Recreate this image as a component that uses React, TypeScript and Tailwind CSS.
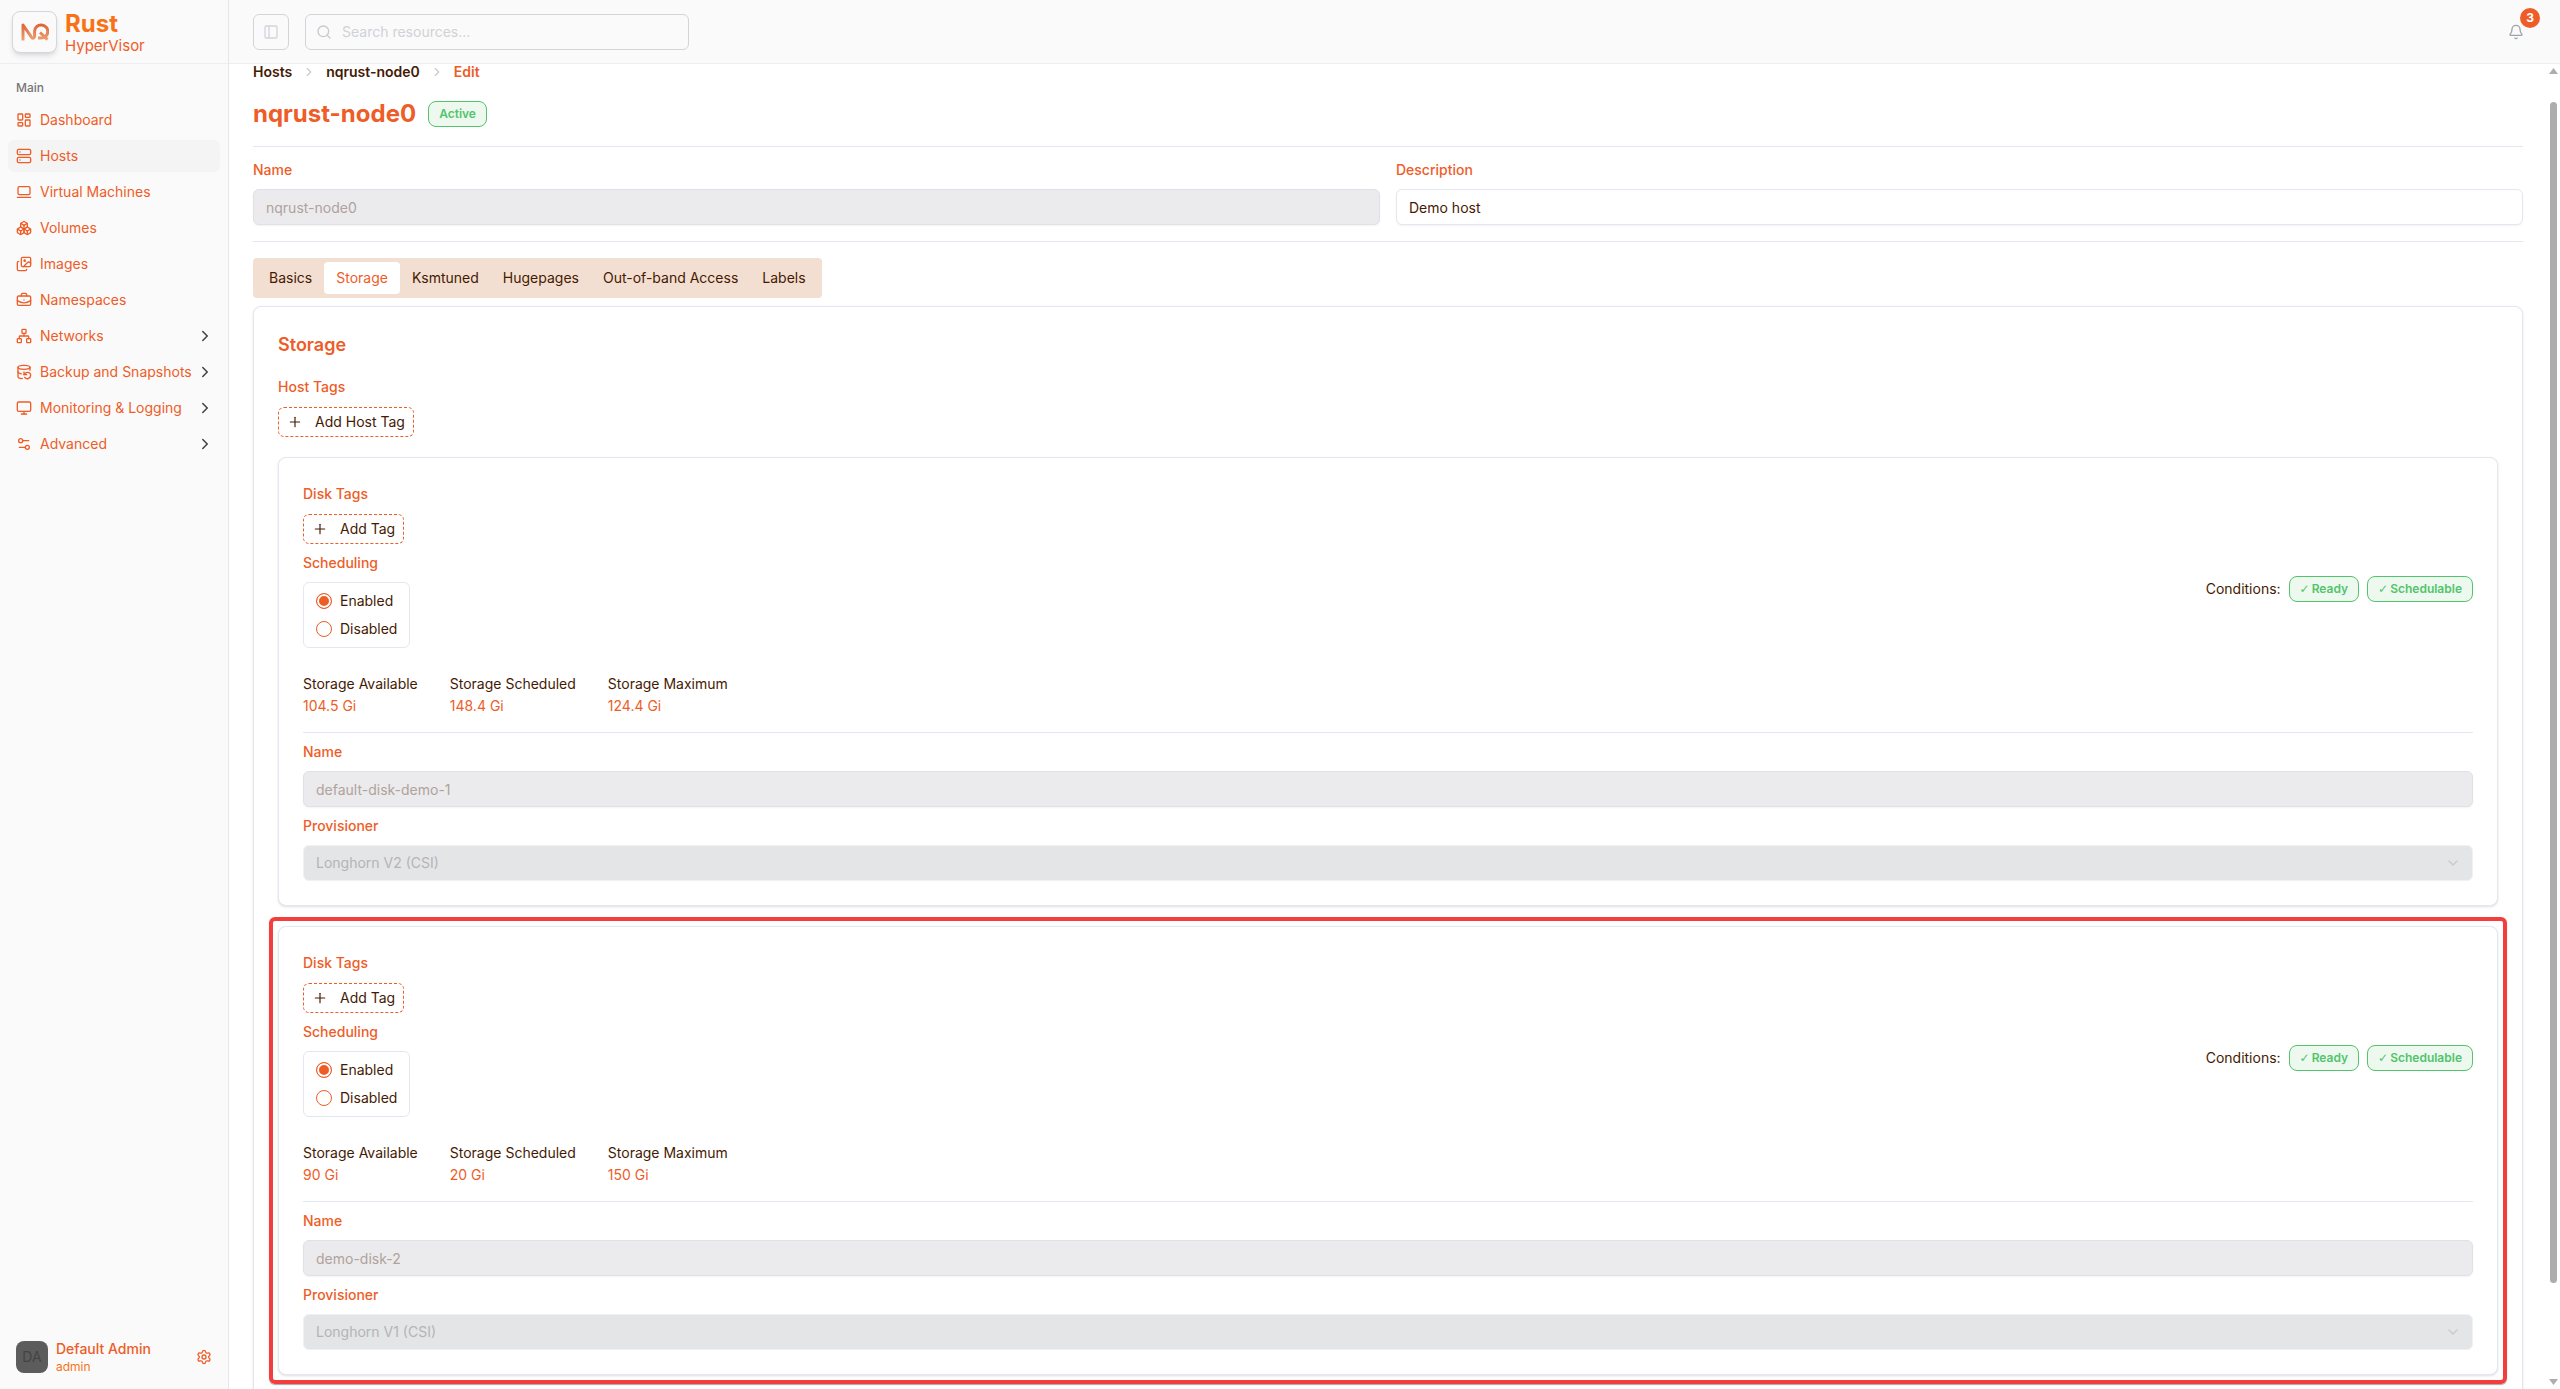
import {
  Bell,
  Boxes,
  BriefcaseBusiness,
  ChevronDown,
  ChevronRight,
  DatabaseBackup,
  Images,
  LaptopMinimal,
  LayoutDashboard,
  Monitor,
  Network,
  PanelLeft,
  Plus,
  Search,
  Server,
  Settings,
  Settings2,
  type LucideIcon,
} from "lucide-react";
import { useState } from "react";

type NavItem = {
  label: string;
  icon: LucideIcon;
  active?: boolean;
  nested?: boolean;
};

type Disk = {
  id: string;
  name: string;
  provisioner: string;
  available: string;
  scheduled: string;
  maximum: string;
  highlighted?: boolean;
};

const NAV_ITEMS: NavItem[] = [
  { label: "Dashboard", icon: LayoutDashboard },
  { label: "Hosts", icon: Server, active: true },
  { label: "Virtual Machines", icon: LaptopMinimal },
  { label: "Volumes", icon: Boxes },
  { label: "Images", icon: Images },
  { label: "Namespaces", icon: BriefcaseBusiness },
  { label: "Networks", icon: Network, nested: true },
  { label: "Backup and Snapshots", icon: DatabaseBackup, nested: true },
  { label: "Monitoring & Logging", icon: Monitor, nested: true },
  { label: "Advanced", icon: Settings2, nested: true },
];

const TABS = ["Basics", "Storage", "Ksmtuned", "Hugepages", "Out-of-band Access", "Labels"];

const DISKS: Disk[] = [
  {
    id: "disk-1",
    name: "default-disk-demo-1",
    provisioner: "Longhorn V2 (CSI)",
    available: "104.5 Gi",
    scheduled: "148.4 Gi",
    maximum: "124.4 Gi",
  },
  {
    id: "disk-2",
    name: "demo-disk-2",
    provisioner: "Longhorn V1 (CSI)",
    available: "90 Gi",
    scheduled: "20 Gi",
    maximum: "150 Gi",
    highlighted: true,
  },
];

const labelClass = "mb-2 block text-sm leading-[22px] font-medium text-[#ee5d27]";
const inputClass =
  "block h-9 w-full rounded-md border border-[#e2e8f0] bg-white px-3 text-sm text-[#451a03] shadow-xs disabled:border-[#e0e1e6] disabled:bg-[#ebebed] disabled:text-[#b0a29c]";

function Logo() {
  return (
    <svg viewBox="0 0 28 20" className="h-5 w-7" fill="none" strokeWidth="3" strokeLinejoin="round">
      <defs>
        <linearGradient id="logo-fill" gradientUnits="userSpaceOnUse" x1="0" y1="1" x2="0" y2="19">
          <stop offset="0" stopColor="#dd5f2f" />
          <stop offset="1" stopColor="#eda379" />
        </linearGradient>
      </defs>
      <path
        d="M2 18.5V3l8.6 12.3c1.2 1.6 3 1 3-1V9.2a6.6 6.6 0 1 1 6.6 6.9H17"
        stroke="url(#logo-fill)"
      />
      <path d="M19 10.5l7.5 7.2" stroke="url(#logo-fill)" />
    </svg>
  );
}

function Sidebar() {
  return (
    <aside className="flex w-[229px] shrink-0 flex-col border-r border-[#e5e7eb] bg-[#fafafa]">
      <div className="flex h-16 shrink-0 items-center gap-2 border-b border-[#eeeeef] px-3">
        <div className="flex h-[42px] w-[45px] items-center justify-center rounded-lg border border-[#d5d7e0] bg-[#fafafa] shadow-md">
          <Logo />
        </div>
        <div className="flex flex-col pt-1">
          <span className="text-2xl leading-6 font-bold text-[#f97316]">Rust</span>
          <span className="text-[15px] leading-5 text-[#ee5d27]">HyperVisor</span>
        </div>
      </div>

      <nav aria-label="Main" className="flex flex-1 flex-col p-2">
        <div className="flex h-8 items-center px-2 text-xs font-medium text-[#777777]">Main</div>
        <ul className="flex flex-col gap-1">
          {NAV_ITEMS.map(({ label, icon: Icon, active, nested }) => (
            <li key={label}>
              <a
                href="#"
                aria-current={active ? "page" : undefined}
                className={`flex h-8 items-center gap-2 rounded-md pr-1.5 pl-2 text-sm whitespace-nowrap text-[#ee5d27] ${active ? "bg-[#f4f4f5]" : ""}`}
              >
                <Icon className="size-4 shrink-0" />
                <span className="min-w-0 flex-1">{label}</span>
                {nested ? <ChevronRight className="size-[18px] shrink-0 text-[#3f3f46]" /> : null}
              </a>
            </li>
          ))}
        </ul>
      </nav>

      <div className="flex items-center gap-2 px-4 pt-4 pb-3.5">
        <div className="flex size-8 items-center justify-center rounded-lg bg-[#5c5c5c] text-sm text-[#444444]">
          DA
        </div>
        <div className="flex flex-1 flex-col">
          <span className="text-sm leading-5 font-medium text-[#ee5d27]">Default Admin</span>
          <span className="text-xs leading-4 text-[#f97316]">admin</span>
        </div>
        <button type="button" aria-label="Settings" className="text-[#ee5d27]">
          <Settings className="size-4" />
        </button>
      </div>
    </aside>
  );
}

function TopBar() {
  return (
    <header className="flex h-16 shrink-0 items-center gap-4 border-b border-[#eeeeef] bg-[#fafafa] pr-9 pl-6">
      <button
        type="button"
        aria-label="Toggle sidebar"
        className="flex size-9 items-center justify-center rounded-md border border-[#d1d5db] text-[#d1d5db]"
      >
        <PanelLeft className="size-4" />
      </button>
      <label className="flex h-9 w-96 items-center gap-2.5 rounded-md border border-[#d1d5db] px-2.5">
        <Search className="size-4 shrink-0 text-[#c6c9ce]" />
        <input
          type="search"
          aria-label="Search resources"
          placeholder="Search resources..."
          className="w-full bg-transparent text-sm outline-none placeholder:text-[#cfd2d7]"
        />
      </label>
      <button
        type="button"
        aria-label="Notifications"
        className="relative ml-auto flex size-4 items-center justify-center text-[#9ca3af]"
      >
        <Bell className="size-4" />
        <span className="absolute -top-4 left-3 flex size-5 items-center justify-center rounded-full bg-[#ee5d27] text-xs font-bold text-white">
          3
        </span>
      </button>
    </header>
  );
}

function StatusBadge({ children, check }: { children: string; check?: boolean }) {
  return (
    <span className="flex h-[26px] items-center gap-0.5 rounded-lg border border-[#51c46c] bg-[#edf9ef] px-2.5 text-xs leading-4 font-semibold whitespace-nowrap text-[#51c46c]">
      {check ? <span className="font-['DejaVu_Sans',sans-serif]">✓</span> : null}
      {children}
    </span>
  );
}

function AddButton({ children }: { children: string }) {
  return (
    <button
      type="button"
      className="flex h-[30px] w-fit items-center gap-3 rounded-md border border-dashed border-[#ee5d27] px-2 text-sm text-[#451a03]"
    >
      <Plus className="size-4" strokeWidth={1.75} />
      {children}
    </button>
  );
}

function SchedulingOptions({ diskId }: { diskId: string }) {
  const [value, setValue] = useState("Enabled");

  return (
    <fieldset>
      <legend className={labelClass}>Scheduling</legend>
      <div className="flex w-fit flex-col gap-2 rounded-md border border-[#e2e8f0] px-3 py-2">
        {["Enabled", "Disabled"].map((option) => (
          <label key={option} className="flex h-5 items-center gap-2 text-sm text-[#451a03]">
            <input
              type="radio"
              name={`${diskId}-scheduling`}
              checked={value === option}
              onChange={() => setValue(option)}
              className="size-4 appearance-none rounded-full border border-[#ee5d27] checked:bg-[#ee5d27] checked:shadow-[inset_0_0_0_2px_white]"
            />
            {option}
          </label>
        ))}
      </div>
    </fieldset>
  );
}

function DiskCard({ disk }: { disk: Disk }) {
  const stats = [
    ["Storage Available", disk.available],
    ["Storage Scheduled", disk.scheduled],
    ["Storage Maximum", disk.maximum],
  ];

  return (
    <section className="relative rounded-lg border border-[#e2e8f0] bg-white p-6 shadow-sm">
      <h3 className="mb-2 text-sm leading-6 font-medium text-[#ee5d27]">Disk Tags</h3>
      <AddButton>Add Tag</AddButton>

      <div className="mt-2 flex items-start justify-between">
        <SchedulingOptions diskId={disk.id} />
        <div className="flex items-center gap-2 pt-6 text-sm text-[#451a03]">
          <span>Conditions:</span>
          <StatusBadge check>Ready</StatusBadge>
          <StatusBadge check>Schedulable</StatusBadge>
        </div>
      </div>

      <dl className="mt-[26px] flex gap-8 text-sm leading-5">
        {stats.map(([term, amount]) => (
          <div key={term} className="flex flex-col gap-0.5">
            <dt className="text-[#451a03]">{term}</dt>
            <dd className="text-[#ee5d27]">{amount}</dd>
          </div>
        ))}
      </dl>

      <hr className="mt-4 mb-2 border-[#e2e8f0]" />

      <label htmlFor={`${disk.id}-name`} className={labelClass}>
        Name
      </label>
      <input id={`${disk.id}-name`} className={inputClass} defaultValue={disk.name} disabled />

      <label htmlFor={`${disk.id}-provisioner`} className={`mt-2 ${labelClass}`}>
        Provisioner
      </label>
      <div className="relative">
        <select
          id={`${disk.id}-provisioner`}
          disabled
          className="block h-9 w-full appearance-none rounded-md border border-[#f0f1f3] bg-[#e4e5e7] px-3 text-sm text-[#b4b4b5] opacity-100"
        >
          <option>{disk.provisioner}</option>
        </select>
        <ChevronDown className="pointer-events-none absolute top-2.5 right-3 size-4 text-[#c8c9cb]" />
      </div>

      {disk.highlighted ? (
        <div className="pointer-events-none absolute -inset-2.5 rounded-md border-4 border-[#f43d3d] shadow-[0_1px_1px_rgba(0,0,0,0.35)]" />
      ) : null}
    </section>
  );
}

function Scrollbar() {
  return (
    <div aria-hidden="true" className="flex w-[13px] shrink-0 flex-col items-center py-1 text-[#adadad]">
      <svg viewBox="0 0 9 6" className="h-1.5 w-[9px]" fill="currentColor">
        <path d="M4.5 0 9 6H0z" />
      </svg>
      <div className="mt-7 mb-24 w-[7px] flex-1 rounded-full bg-[#adadad]" />
      <svg viewBox="0 0 9 6" className="h-1.5 w-[9px]" fill="currentColor">
        <path d="M0 0h9L4.5 6z" />
      </svg>
    </div>
  );
}

export default function App() {
  const [tab, setTab] = useState("Storage");

  return (
    <div className="flex h-screen overflow-hidden bg-white font-['Inter',sans-serif]">
      <Sidebar />

      <div className="flex min-w-0 flex-1 flex-col">
        <TopBar />

        <div className="flex min-h-0 flex-1">
          <main className="min-w-0 flex-1 overflow-hidden px-6">
            <nav aria-label="Breadcrumb">
              <ol className="flex items-center gap-2.5 text-sm leading-4 font-semibold text-[#451a03]">
                <li>
                  <a href="#">Hosts</a>
                </li>
                <li aria-hidden="true">
                  <ChevronRight className="size-3.5 text-[#c9c9cc]" />
                </li>
                <li>
                  <a href="#">nqrust-node0</a>
                </li>
                <li aria-hidden="true">
                  <ChevronRight className="size-3.5 text-[#c9c9cc]" />
                </li>
                <li aria-current="page" className="text-[#ee5d27]">
                  Edit
                </li>
              </ol>
            </nav>

            <div className="mt-[18px] flex items-center gap-3">
              <h1 className="text-2xl font-bold text-[#ee5d27]">nqrust-node0</h1>
              <StatusBadge>Active</StatusBadge>
            </div>

            <hr className="mt-4 mb-3 border-[#e2e8f0]" />

            <div className="grid grid-cols-2 gap-4">
              <div>
                <label htmlFor="host-name" className={labelClass}>
                  Name
                </label>
                <input id="host-name" className={inputClass} defaultValue="nqrust-node0" disabled />
              </div>
              <div>
                <label htmlFor="host-description" className={labelClass}>
                  Description
                </label>
                <input id="host-description" className={inputClass} defaultValue="Demo host" />
              </div>
            </div>

            <hr className="my-4 border-[#e2e8f0]" />

            <div role="tablist" className="flex h-10 w-fit rounded-sm bg-[#f3dfd1] p-1">
              {TABS.map((name) => (
                <button
                  key={name}
                  type="button"
                  role="tab"
                  aria-selected={tab === name}
                  onClick={() => setTab(name)}
                  className={`rounded-sm px-3 text-sm ${tab === name ? "bg-white text-[#ee5d27]" : "text-[#451a03]"}`}
                >
                  {name}
                </button>
              ))}
            </div>

            <section className="mt-2 rounded-lg border border-[#e2e8f0] bg-white p-6 shadow-sm">
              <h2 className="mb-4 text-lg leading-7 font-semibold text-[#ee5d27]">Storage</h2>
              <h3 className="mb-2 text-sm leading-6 font-medium text-[#ee5d27]">Host Tags</h3>
              <AddButton>Add Host Tag</AddButton>
              <div className="mt-5 flex flex-col gap-5">
                {DISKS.map((disk) => (
                  <DiskCard key={disk.id} disk={disk} />
                ))}
              </div>
            </section>
          </main>
          <Scrollbar />
        </div>
      </div>
    </div>
  );
}
